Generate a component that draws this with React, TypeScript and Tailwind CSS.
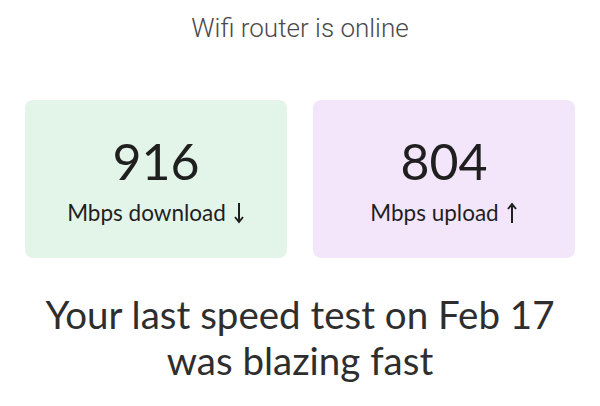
function Stat({ value, label, up, tone }: { value: string; label: string; up?: boolean; tone: string }) {
  return (
    <div className={`h-[158px] rounded-[8px] flex flex-col items-center pt-[32px] ${tone}`}>
      <div className="text-[50px] leading-[58px] text-[#1f1f1f] font-['Lato',sans-serif]">{value}</div>
      <div className="mt-[8px] text-[22.5px] leading-[30px] text-[#1f1f1f] font-['Lato',sans-serif] flex items-center gap-[7px]">
        {label}
        <svg width="12" height="24" viewBox="0 0 12 24" fill="none" stroke="#1f1f1f" strokeWidth="2">
          {up ? <path d="M6 22V4M2 8l4-5 4 5" /> : <path d="M6 2v18M2 16l4 5 4-5" />}
        </svg>
      </div>
    </div>
  );
}

export default function App() {
  return (
    <div className="w-[600px] h-[406px] bg-white overflow-hidden flex flex-col items-center">
      <h1 className="mt-[11px] text-[26px] leading-[34px] text-[#4a4a4a] font-['Roboto',sans-serif] font-light">
        Wifi router is online
      </h1>

      <div className="mt-[55px] w-full px-[25px] grid grid-cols-2 gap-[26px]">
        <Stat value="916" label="Mbps download" tone="bg-[#e3f4e9]" />
        <Stat value="804" label="Mbps upload" up tone="bg-[#f3e6fb]" />
      </div>

      <p className="mt-[33px] text-[38.5px] leading-[46px] text-[#2e2e2e] text-center font-['Lato',sans-serif]">
        Your last speed test on Feb 17
        <br />
        was blazing fast
      </p>
    </div>
  );
}
